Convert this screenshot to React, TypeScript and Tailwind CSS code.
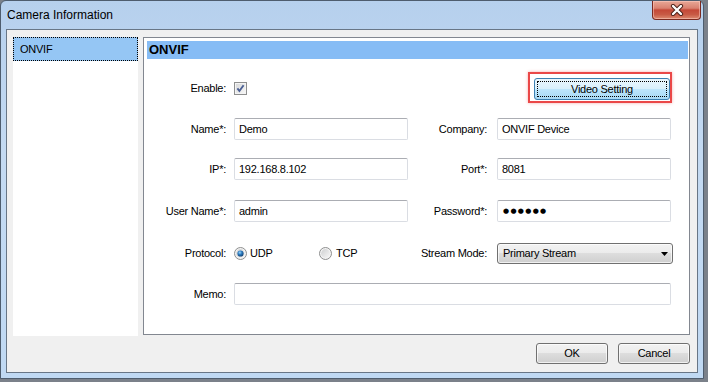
import React from "react";

const TextBox = ({ value, className = "" }: { value?: string; className?: string }) => (
  <div
    className={`h-[22px] flex items-center pl-[4px] bg-white border border-[#dadde3] border-t-[#abadb3] rounded-[2px] text-[11px] tracking-[-0.25px] ${className}`}
  >
    {value}
  </div>
);

const Label = ({ text, className = "" }: { text: string; className?: string }) => (
  <div className={`text-right text-[11px] tracking-[-0.25px] shrink-0 ${className}`}>{text}</div>
);

const CheckBox = () => (
  <svg width="13" height="13" viewBox="0 0 13 13">
    <defs>
      <linearGradient id="cbg" x1="0" y1="0" x2="1" y2="1">
        <stop offset="0" stopColor="#d9dadb" />
        <stop offset="1" stopColor="#f6f6f6" />
      </linearGradient>
    </defs>
    <rect x="0.5" y="0.5" width="12" height="12" fill="#f4f4f4" stroke="#8e8f8f" />
    <rect x="2" y="2" width="9" height="9" fill="url(#cbg)" />
    <path d="M3.4 6.4 L5.4 9 L9.6 3.2" stroke="#4b5f94" strokeWidth="1.9" fill="none" />
  </svg>
);

const Radio = ({ checked }: { checked?: boolean }) => (
  <svg width="13" height="13" viewBox="0 0 13 13">
    <defs>
      <radialGradient id="rdot" cx="0.4" cy="0.35" r="0.7">
        <stop offset="0" stopColor="#9fd6f8" />
        <stop offset="0.45" stopColor="#2b7bc0" />
        <stop offset="1" stopColor="#0e3a6a" />
      </radialGradient>
      <linearGradient id="rbg" x1="0" y1="0" x2="1" y2="1">
        <stop offset="0" stopColor="#cfd0d1" />
        <stop offset="1" stopColor="#f7f7f7" />
      </linearGradient>
    </defs>
    <circle cx="6.5" cy="6.5" r="6" fill="#f3f3f3" stroke="#8e8f8f" />
    <circle cx="6.5" cy="6.5" r="4.4" fill="url(#rbg)" />
    {checked && <circle cx="6.5" cy="6.5" r="3.1" fill="url(#rdot)" />}
  </svg>
);

const WinButton = ({ text }: { text: string }) => (
  <button className="w-[72px] h-[21px] rounded-[3px] border border-[#707070] bg-[linear-gradient(#f2f2f2_0%,#ebebeb_50%,#dddddd_50%,#cfcfcf_100%)] shadow-[inset_0_0_0_1px_rgba(255,255,255,0.7)] text-[11px] tracking-[-0.25px] flex items-center justify-center">
    {text}
  </button>
);

const CloseButton = () => (
  <div className="w-[49px] h-[19px] rounded-b-[4px] border border-t-0 border-[#7b2a20] bg-[linear-gradient(#e8a897_0%,#d98170_40%,#c44837_50%,#c85a45_75%,#dc8a70_100%)] shadow-[inset_0_0_0_1px_rgba(255,210,200,0.5)] flex items-center justify-center">
    <svg width="14" height="12" viewBox="0 0 14 12">
      <path d="M3 2 L11 10 M11 2 L3 10" stroke="#4a2018" strokeWidth="4.2" strokeLinecap="round" />
      <path d="M3 2 L11 10 M11 2 L3 10" stroke="#ffffff" strokeWidth="2.4" strokeLinecap="round" />
    </svg>
  </div>
);

export default function App() {
  return (
    <div className="w-[708px] h-[382px] bg-[#7b818a] font-['Liberation_Sans',Arial,sans-serif] text-black overflow-hidden">
      <div className="w-[704px] h-[379px] flex flex-col rounded-t-[6px] border border-[#4e5d6e] bg-[linear-gradient(180deg,#b6d0ed_0%,#c4daf2_40%,#c0d9f3_100%)]">
        {/* title bar */}
        <div className="h-[28px] shrink-0 flex items-start justify-between pl-[6px] pr-[2px]">
          <div className="text-[12px] leading-[12px] mt-[8px]">Camera Information</div>
          <CloseButton />
        </div>

        {/* client area */}
        <div className="mx-[5px] mb-[5px] flex-1 border border-[#687686] bg-[#f0f0f0] flex flex-col">
          <div className="flex gap-[5px] pt-[7px] pl-[6px] pr-[7px]">
            {/* list */}
            <div className="w-[125px] h-[299px] bg-white">
              <div className="h-[24px] bg-[#95c6f4] border border-dotted border-black flex items-center pl-[6px] text-[11px] tracking-[-0.25px]">
                ONVIF
              </div>
            </div>

            {/* panel */}
            <div className="w-[547px] h-[298px] border border-[#828790] bg-white flex flex-col">
              <div className="h-[18px] mt-[3px] ml-[3px] mr-[1px] bg-[#86bcf5] flex items-center pl-[2px] text-[13px] font-bold">
                ONVIF
              </div>

              {/* row: enable / video setting */}
              <div className="mt-[13px] h-[31px] flex items-center">
                <div className="flex items-center mt-[2px]">
                  <Label text="Enable:" className="w-[82px]" />
                  <div className="ml-[8px] w-[174px] flex">
                    <CheckBox />
                  </div>
                </div>
                <div className="w-[79px]" />
                <div className="ml-[41px] h-[31px] border-2 border-[#ea4848] shadow-[0_0_3px_rgba(234,72,72,0.45)] pl-[4px] pt-[4px] pb-[1px]">
                  <button className="w-[136px] h-[22px] rounded-[3px] border border-[#3c7fb1] bg-[linear-gradient(#eaf6fd_0%,#d9f0fc_50%,#bee6fd_50%,#a7d9f5_100%)] p-[2px] flex">
                    <div className="flex-1 border border-dotted border-black flex items-center justify-center text-[11px] tracking-[-0.25px]">
                      Video Setting
                    </div>
                  </button>
                </div>
              </div>

              {/* row: name / company */}
              <div className="mt-[15px] h-[22px] flex items-center">
                <Label text="Name*:" className="w-[82px]" />
                <TextBox value="Demo" className="ml-[8px] w-[174px]" />
                <Label text="Company:" className="w-[79px]" />
                <TextBox value="ONVIF Device" className="ml-[10px] w-[174px]" />
              </div>

              {/* row: ip / port */}
              <div className="mt-[18px] h-[22px] flex items-center">
                <Label text="IP*:" className="w-[82px]" />
                <TextBox value="192.168.8.102" className="ml-[8px] w-[174px]" />
                <Label text="Port*:" className="w-[79px]" />
                <TextBox value="8081" className="ml-[10px] w-[174px]" />
              </div>

              {/* row: user / password */}
              <div className="mt-[20px] h-[22px] flex items-center">
                <Label text="User Name*:" className="w-[82px]" />
                <TextBox value="admin" className="ml-[8px] w-[174px]" />
                <Label text="Password*:" className="w-[79px]" />
                <div className="ml-[10px] w-[174px] h-[22px] flex items-center pl-[5px] bg-white border border-[#dadde3] border-t-[#abadb3] rounded-[2px] font-['DejaVu_Sans',sans-serif] text-[7px] tracking-[1.3px]">
                  ●●●●●●
                </div>
              </div>

              {/* row: protocol / stream mode */}
              <div className="mt-[21px] h-[21px] flex items-center">
                <Label text="Protocol:" className="w-[82px]" />
                <div className="ml-[8px] w-[174px] flex items-center text-[11px] tracking-[-0.25px]">
                  <div className="w-[85px] flex items-center gap-[3px]">
                    <Radio checked />
                    <span>UDP</span>
                  </div>
                  <div className="flex items-center gap-[4px]">
                    <Radio />
                    <span>TCP</span>
                  </div>
                </div>
                <Label text="Stream Mode:" className="w-[79px]" />
                <div className="ml-[10px] w-[176px] h-[21px] rounded-[3px] border border-[#707070] bg-[linear-gradient(#f2f2f2_0%,#ebebeb_50%,#dddddd_50%,#cfcfcf_100%)] shadow-[inset_0_0_0_1px_rgba(255,255,255,0.7)] flex items-center justify-between pl-[5px] pr-[4px] text-[11px] tracking-[-0.25px]">
                  <span>Primary Stream</span>
                  <svg width="7" height="4" viewBox="0 0 7 4">
                    <path d="M0 0 H7 L3.5 4 Z" fill="#000" />
                  </svg>
                </div>
              </div>

              {/* row: memo */}
              <div className="mt-[19px] h-[22px] flex items-center">
                <Label text="Memo:" className="w-[82px]" />
                <TextBox className="ml-[8px] w-[437px]" />
              </div>
            </div>
          </div>

          {/* buttons */}
          <div className="mt-[7px] pr-[7px] flex justify-end gap-[10px]">
            <WinButton text="OK" />
            <WinButton text="Cancel" />
          </div>
        </div>
      </div>
    </div>
  );
}
